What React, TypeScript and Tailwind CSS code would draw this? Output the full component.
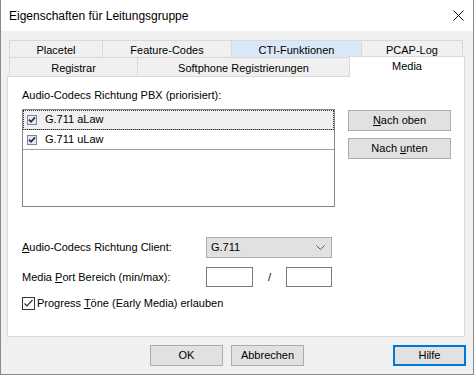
import React from 'react';

const tabBase = 'flex items-center justify-center border-t border-l border-[#d9d9d9]';

const ListCheck = () => (
  <svg width="10" height="10" viewBox="0 0 10 10" className="shrink-0">
    <rect x="0.5" y="0.5" width="9" height="9" fill="#e6e8ee" stroke="#7f8593" />
    <path d="M2 4.6 L4 6.8 L8 2.4" fill="none" stroke="#1f2a5a" strokeWidth="1.6" />
  </svg>
);

const Btn = ({ children, className = '' }: { children: React.ReactNode; className?: string }) => (
  <div
    className={`flex items-center justify-center bg-[#e1e1e1] border border-[#adadad] h-[21px] ${className}`}
  >
    {children}
  </div>
);

const App = () => {
  return (
    <div className="w-[474px] h-[375px] bg-[#f0f0f0] border-l border-r border-b border-[#8a8a8a] flex flex-col text-[11px] text-black font-['Liberation_Sans',Arial,sans-serif] leading-none select-none">
      {/* title bar */}
      <div className="h-[31px] bg-white flex items-center justify-between pl-[8px] pr-[9px] shrink-0">
        <span className="text-[12px]">Eigenschaften für Leitungsgruppe</span>
        <svg width="11" height="11" viewBox="0 0 11 11">
          <path d="M0.5 0.5 L10.5 10.5 M10.5 0.5 L0.5 10.5" stroke="#111" strokeWidth="1" />
        </svg>
      </div>

      <div className="ml-[6px] w-[458px] mt-[9px] flex flex-col">
        {/* tab row 1 */}
        <div className="ml-[2px] flex h-[17px]">
          <div className={`${tabBase} w-[93px] pt-[2px]`}>Placetel</div>
          <div className={`${tabBase} w-[129px] pt-[2px]`}>Feature-Codes</div>
          <div className={`${tabBase} w-[130px] pt-[2px] bg-[#d9e7f6]`}>CTI-Funktionen</div>
          <div className={`${tabBase} w-[102px] pt-[2px] border-r`}>PCAP-Log</div>
        </div>
        {/* tab row 2 */}
        <div className="ml-[2px] flex h-[19px]">
          <div className={`${tabBase} w-[128px] pt-[2px]`}>Registrar</div>
          <div className={`${tabBase} w-[212px] pt-[2px]`}>Softphone Registrierungen</div>
          <div className={`${tabBase} w-[116px] border-r bg-white -mt-[1px] -mb-[1px] relative z-10 pb-[2px]`}>
            Media
          </div>
        </div>

        {/* panel */}
        <div className="h-[261px] bg-white border border-[#d9d9d9] pl-[14px] pt-[10px] flex flex-col">
          <div className="h-[16px] flex items-center">Audio-Codecs Richtung PBX (priorisiert):</div>
          <div className="mt-[6px] flex">
            <div className="w-[313px] h-[98px] border border-[#828790] flex flex-col">
              <div className="h-[20px] border-b border-[#a0a0a0] bg-[#efefef] outline-1 outline-dotted outline-[#333] -outline-offset-1 flex items-center pl-[4px] gap-[8px]">
                <ListCheck />
                <span>G.711 aLaw</span>
              </div>
              <div className="h-[20px] border-b border-[#a0a0a0] flex items-center pl-[4px] gap-[8px]">
                <ListCheck />
                <span>G.711 uLaw</span>
              </div>
            </div>
            <div className="ml-[13px] mt-[1px] flex flex-col gap-[7px]">
              <Btn className="w-[103px]">
                <span>
                  <span className="underline">N</span>ach oben
                </span>
              </Btn>
              <Btn className="w-[103px]">
                <span>
                  Nach <span className="underline">u</span>nten
                </span>
              </Btn>
            </div>
          </div>

          <div className="mt-[30px] flex items-center h-[21px]">
            <span className="w-[184px]">
              <span className="underline">A</span>udio-Codecs Richtung Client:
            </span>
            <div className="w-[126px] h-[21px] bg-[#e1e1e1] border border-[#adadad] flex items-center justify-between pl-[4px] pr-[6px]">
              <span>G.711</span>
              <svg width="9" height="5" viewBox="0 0 9 5">
                <path d="M0.5 0.5 L4.5 4.5 L8.5 0.5" fill="none" stroke="#555" strokeWidth="1" />
              </svg>
            </div>
          </div>

          <div className="mt-[9px] flex items-center h-[20px]">
            <span className="w-[184px]">
              Media <span className="underline">P</span>ort Bereich (min/max):
            </span>
            <div className="w-[47px] h-[20px] border border-[#7a7a7a] bg-white" />
            <span className="w-[33px] text-center">/</span>
            <div className="w-[46px] h-[20px] border border-[#7a7a7a] bg-white" />
          </div>

          <div className="mt-[10px] flex items-center gap-[2px]">
            <svg width="13" height="13" viewBox="0 0 13 13" className="shrink-0">
              <rect x="0.5" y="0.5" width="12" height="12" fill="#fff" stroke="#333" />
              <path d="M2.5 6.5 L5 9 L10.5 3" fill="none" stroke="#333" strokeWidth="1.2" />
            </svg>
            <span>
              Progress <span className="underline">T</span>öne (Early Media) erlauben
            </span>
          </div>
        </div>
      </div>

      {/* dialog buttons */}
      <div className="mt-[8px] flex ml-[149px]">
        <Btn className="w-[73px]">OK</Btn>
        <Btn className="w-[73px] ml-[8px]">Abbrechen</Btn>
        <div className="w-[73px] h-[21px] ml-[89px] bg-[#e1e1e1] border-2 border-[#0078d7] flex items-center justify-center">
          Hilfe
        </div>
      </div>
    </div>
  );
};

export default App;
